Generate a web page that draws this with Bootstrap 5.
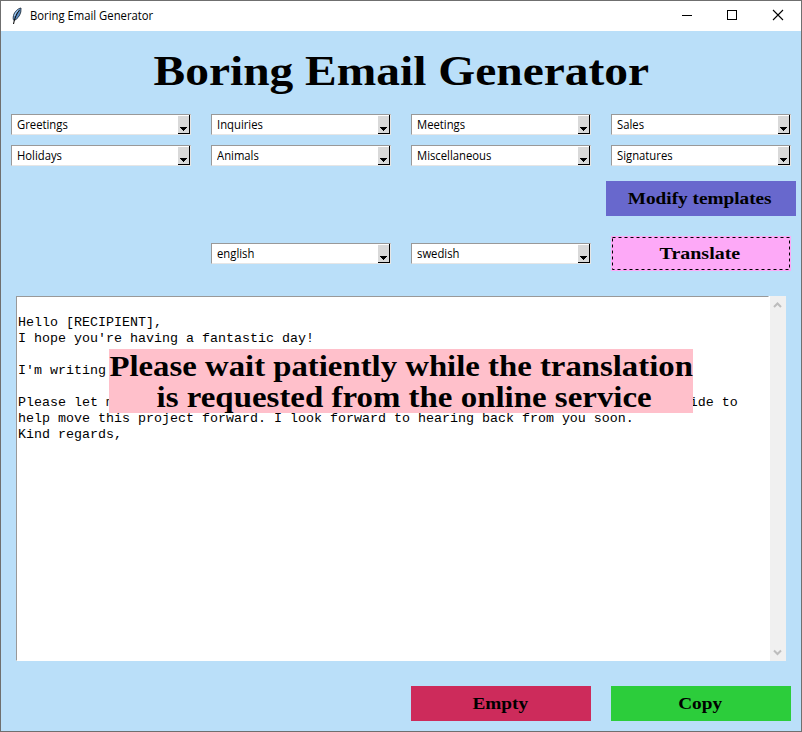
<!DOCTYPE html>
<html lang="en">
<head>
<meta charset="utf-8">
<title>Boring Email Generator</title>
<link href="https://cdn.jsdelivr.net/npm/bootstrap@5.3.0/dist/css/bootstrap.min.css" rel="stylesheet">
<style>
body{margin:0;font-family:"Open Sans","Noto Sans",sans-serif;font-size:12px;color:#000;overflow:hidden}
.app-window{width:802px;height:732px;border:1px solid #6f6f6f;background:#badff9}
.title-bar{height:30px;background:#fff}
.title-bar .feather{margin:0 7px 0 9px}
.ui-text{display:inline-block;transform:scaleX(.94);transform-origin:left center;white-space:nowrap}
.win-btn{width:46px;height:30px}
.serif{font-family:"Liberation Serif",serif;font-weight:700}
.wide{display:inline-block;transform:scaleX(1.13);white-space:nowrap}
.main-title{height:83px;font-size:42px;line-height:81px;margin:0}
.pad10{padding:0 10px}
.combo-row{height:31px}
.combo{height:21px;background:#fff;border:1px solid;border-color:#999 #e6e6e6 #e6e6e6 #999;line-height:20px;padding-left:5px}
.drop{width:12px;height:19px;background:#d9d9d9;border-right:1px solid #000;border-bottom:1px solid #000;box-shadow:-1px 0 #fff,inset 0 1px #fff}
.drop svg{margin-bottom:2px}
.modify-row{padding-top:5px}
.translate-row{padding-top:20px}
.footer-row{padding-top:25px}
.flat-btn{height:35px;border:0;border-radius:0;padding:0 2px 0 0;font-size:16.8px;line-height:35px;color:#000;width:100%;display:block;text-align:center}
.flat-btn .wide{transform:scaleX(1.147)}
.modify{background:#6868cd;margin:0 5px;width:190px}
.translate{background:#fda9f7;position:relative}
.translate .wide{transform:scaleX(1.19)}
.translate svg{position:absolute;left:0;top:0}
.empty{background:#cd2b5b}
.copy{background:#2ccd3b}
.editor{margin:25px 15px 0;height:365px}
.mail{background:#fff;border:1px solid;border-color:#999 #fff #fff #999;padding:2px 0 0 1px;font:13.333px/16px "Liberation Mono",monospace;white-space:pre;overflow:hidden}
.scroll{width:17px;background:#f0f0f0;border-left:1px solid #fff;padding:5px 2px 4px 0}
.notice{position:absolute;left:93px;top:53px;width:584px;height:64px;background:#ffc0cb;font-size:29px;line-height:31px;padding-top:2px}
.notice .second{transform:scaleX(1.135);margin-left:6px}
</style>
<script src="https://cdn.jsdelivr.net/npm/bootstrap@5.3.0/dist/js/bootstrap.bundle.min.js"></script>
</head>
<body>
<svg width="0" height="0" class="position-absolute"><defs>
<path id="tri" d="M0 1h7v1h-1v1h-1v1h-1v1h-1v-1h-1v-1h-1v-1h-1z"/>
</defs></svg>
<div class="app-window">
  <header class="title-bar d-flex align-items-center">
    <svg class="feather" width="13" height="18" viewBox="0 0 13 18"><path d="M11 1C8 1.500 4.500 4.500 3.500 8.500C3 11 3 12.500 4 13.500C7 12.500 9.800 9 10.800 5Z" fill="#5c90c9" stroke="#26323e" stroke-width=".9"/><path d="M9.500 3C7 6 4.800 10 3.500 17" fill="none" stroke="#111" stroke-width="1.100"/><path d="M8.500 3C6.500 4.500 5 7 4.600 9" fill="none" stroke="#b8d9f5"/></svg>
    <span class="ui-text">Boring Email Generator</span>
    <div class="ms-auto d-flex">
      <svg class="win-btn" viewBox="0 0 46 30"><path d="M19 14.500h10" stroke="#000"/></svg>
      <svg class="win-btn" viewBox="0 0 46 30"><rect x="18.500" y="9.500" width="9" height="9" fill="none" stroke="#000"/></svg>
      <svg class="win-btn" viewBox="0 0 46 30"><path d="M18 9l10 10M28 9l-10 10" stroke="#000" stroke-width="1.100"/></svg>
    </div>
  </header>
  <h1 class="main-title serif text-center"><span class="wide">Boring Email Generator</span></h1>

  <div class="row g-0 combo-row">
    <div class="col-3 pad10"><div class="combo d-flex justify-content-between"><span class="ui-text">Greetings</span><span class="drop d-flex align-items-end justify-content-center"><svg width="7" height="5"><use href="#tri"/></svg></span></div></div>
    <div class="col-3 pad10"><div class="combo d-flex justify-content-between"><span class="ui-text">Inquiries</span><span class="drop d-flex align-items-end justify-content-center"><svg width="7" height="5"><use href="#tri"/></svg></span></div></div>
    <div class="col-3 pad10"><div class="combo d-flex justify-content-between"><span class="ui-text">Meetings</span><span class="drop d-flex align-items-end justify-content-center"><svg width="7" height="5"><use href="#tri"/></svg></span></div></div>
    <div class="col-3 pad10"><div class="combo d-flex justify-content-between"><span class="ui-text">Sales</span><span class="drop d-flex align-items-end justify-content-center"><svg width="7" height="5"><use href="#tri"/></svg></span></div></div>
  </div>
  <div class="row g-0 combo-row">
    <div class="col-3 pad10"><div class="combo d-flex justify-content-between"><span class="ui-text">Holidays</span><span class="drop d-flex align-items-end justify-content-center"><svg width="7" height="5"><use href="#tri"/></svg></span></div></div>
    <div class="col-3 pad10"><div class="combo d-flex justify-content-between"><span class="ui-text">Animals</span><span class="drop d-flex align-items-end justify-content-center"><svg width="7" height="5"><use href="#tri"/></svg></span></div></div>
    <div class="col-3 pad10"><div class="combo d-flex justify-content-between"><span class="ui-text">Miscellaneous</span><span class="drop d-flex align-items-end justify-content-center"><svg width="7" height="5"><use href="#tri"/></svg></span></div></div>
    <div class="col-3 pad10"><div class="combo d-flex justify-content-between"><span class="ui-text">Signatures</span><span class="drop d-flex align-items-end justify-content-center"><svg width="7" height="5"><use href="#tri"/></svg></span></div></div>
  </div>

  <div class="row g-0 justify-content-end modify-row">
    <div class="col-3"><button class="flat-btn modify serif"><span class="wide">Modify templates</span></button></div>
  </div>
  <div class="row g-0 justify-content-end align-items-center translate-row">
    <div class="col-3 pad10"><div class="combo d-flex justify-content-between"><span class="ui-text">english</span><span class="drop d-flex align-items-end justify-content-center"><svg width="7" height="5"><use href="#tri"/></svg></span></div></div>
    <div class="col-3 pad10"><div class="combo d-flex justify-content-between"><span class="ui-text">swedish</span><span class="drop d-flex align-items-end justify-content-center"><svg width="7" height="5"><use href="#tri"/></svg></span></div></div>
    <div class="col-3 pad10"><button class="flat-btn translate serif"><svg width="180" height="35"><rect x="1.500" y="1.500" width="177" height="32" fill="none" stroke="#000" stroke-dasharray="3 3"/></svg><span class="wide">Translate</span></button></div>
  </div>

  <section class="editor d-flex position-relative">
    <div class="mail flex-grow-1">
Hello [RECIPIENT],
I hope you're having a fantastic day!

I'm writing to follow up on our current project.

Please let me know if there is any additional information or support that I can provide to
help move this project forward. I look forward to hearing back from you soon.
Kind regards,</div>
    <div class="scroll d-flex flex-column justify-content-between align-items-center">
      <svg width="9" height="8"><path d="M1 6l3.500-3.500L8 6" fill="none" stroke="#bdbdbd" stroke-width="2"/></svg>
      <svg width="9" height="8"><path d="M1 1.500l3.500 3.500L8 1.500" fill="none" stroke="#bdbdbd" stroke-width="2"/></svg>
    </div>
    <div class="notice serif">
      <div class="d-flex justify-content-center"><span class="wide">Please wait patiently while the translation</span></div>
      <div class="d-flex justify-content-center"><span class="wide second">is requested from the online service</span></div>
    </div>
  </section>

  <div class="row g-0 justify-content-end footer-row">
    <div class="col-3 pad10"><button class="flat-btn empty serif"><span class="wide">Empty</span></button></div>
    <div class="col-3 pad10"><button class="flat-btn copy serif"><span class="wide">Copy</span></button></div>
  </div>
</div>
</body>
</html>
